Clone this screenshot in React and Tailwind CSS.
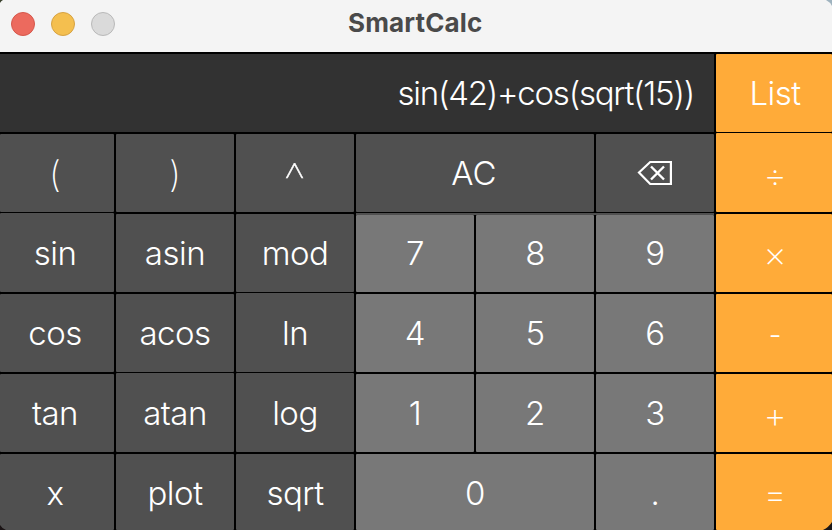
const tones = {
  dark: 'bg-[#505050]',
  light: 'bg-[#787878]',
  orange: 'bg-[#ffab39]',
}

function Key({ tone = 'dark', pad = 'pt-[19px]', className = '', weight = 'font-light', textClass = 'tracking-[-0.5px]', children }) {
  return (
    <button
      type="button"
      className={`flex min-w-0 justify-center rounded-[1px] text-[33px] leading-[40px] text-white ${weight} ${pad} ${tones[tone]} ${className}`}
    >
      <span className={`block whitespace-nowrap ${textClass}`}>{children}</span>
    </button>
  )
}

function Backspace() {
  return (
    <svg width="38" height="28" viewBox="0 0 38 28" fill="none" stroke="white" className="mt-[6px]">
      <path d="M3 13.5 L14.2 3 H34.9 V25 H14.2 Z" strokeWidth="2.2" />
      <path d="M15 7.5 L28 20.5 M28 7.5 L15 20.5" strokeWidth="2.4" />
    </svg>
  )
}

export default function App() {
  return (
    <div className="relative flex h-[530px] w-[832px] flex-col overflow-hidden bg-black font-['Inter','Liberation_Sans',sans-serif]">
      <header className="relative flex h-[52px] shrink-0 items-center bg-[#f4f4f4]">
        <div className="mb-1 ml-[11px] flex gap-4">
          <i className="size-6 rounded-full border border-[#d5574b] bg-[#ec6a5e]" />
          <i className="size-6 rounded-full border border-[#d6a243] bg-[#f4bf4f]" />
          <i className="size-6 rounded-full border border-[#b9b9b9] bg-[#dadada]" />
        </div>
        <h1 className="mb-[6px] ml-[233px] text-[26px] leading-8 font-bold tracking-[0.15px] whitespace-nowrap text-[#4a4a4a]">SmartCalc</h1>
      </header>
      <main className="grid grow grid-cols-[114px_118px_118px_118px_118px_118px_116px] grid-rows-[78px_78px_78px_78px_78px_76px] gap-[2px] pt-[2px]">
        <div className="col-span-6 flex justify-end bg-[#323232] pt-[19px] pr-[20px] text-[33px] leading-[40px] font-light text-white">
          <span className="tracking-[-1.23px] whitespace-nowrap">sin(42)+cos(sqrt(15))</span>
        </div>
        <Key tone="orange" className="pl-[2px]">List</Key>

        <Key className="pr-[4px]" pad="pt-[20px]" weight="font-extralight" textClass="text-[36px]">(</Key>
        <Key pad="pt-[20px]" weight="font-extralight" textClass="text-[36px]">)</Key>
        <Key pad="pt-[26px]" weight="font-thin" textClass="scale-x-115 text-[48px] [-webkit-text-stroke:0.4px_white]">^</Key>
        <Key className="col-span-2 pr-[2px]" textClass="">AC</Key>
        <Key><Backspace /></Key>
        <Key tone="orange" pad="pt-[22px]" className="-mt-px pl-[2px]" weight="font-extralight" textClass="text-[36px]">÷</Key>

        <Key pad="pt-[20px]" className="-mt-px pr-[4px]">sin</Key>
        <Key>asin</Key>
        <Key>mod</Key>
        <div className="col-span-3 -mt-px grid grid-cols-3 gap-[2px] border-t-2 border-[#505050] bg-black">
          <Key tone="light" pad="pt-[18px]">7</Key>
          <Key tone="light" pad="pt-[18px]">8</Key>
          <Key tone="light" pad="pt-[18px]">9</Key>
        </div>
        <Key tone="orange" pad="pt-[20px]" className="pl-[2px]" weight="font-extralight" textClass="text-[36px]">×</Key>

        <Key className="pr-[4px]">cos</Key>
        <Key>acos</Key>
        <Key pad="pt-[20px]" className="-mt-px">ln</Key>
        <Key tone="light">4</Key>
        <Key tone="light">5</Key>
        <Key tone="light">6</Key>
        <Key tone="orange" pad="pt-[21px]" className="pl-[2px]" textClass="text-[28px]">-</Key>

        <Key className="pr-[4px]">tan</Key>
        <Key pad="pt-[20px]" className="-mt-px">atan</Key>
        <Key pad="pt-[20px]" className="-mt-px">log</Key>
        <Key tone="light">1</Key>
        <Key tone="light">2</Key>
        <Key tone="light">3</Key>
        <Key tone="orange" pad="pt-[21px]" className="pl-[2px]" weight="font-extralight" textClass="text-[36px]">+</Key>

        <Key className="pr-[4px]">x</Key>
        <Key>plot</Key>
        <Key>sqrt</Key>
        <Key tone="light" className="col-span-2">0</Key>
        <Key tone="light">.</Key>
        <Key tone="orange" pad="pt-[20px]" className="pl-[2px]" weight="font-extralight" textClass="text-[36px]">=</Key>
      </main>
      <svg className="absolute top-0 left-0" width="3" height="3"><path d="M0 0H3Q1 1 0 3Z" fill="#39402c" /></svg>
      <svg className="absolute top-0 right-0" width="6" height="6"><path d="M0 0H6V6Q4 2 0 0Z" fill="#9fb3bf" /></svg>
      <svg className="absolute bottom-0 left-0" width="6" height="5"><path d="M0 0Q2 3.5 6 5H0Z" fill="#1b1415" /></svg>
      <svg className="absolute right-0 bottom-0" width="9" height="8"><path d="M9 0Q6 5 0 8H9Z" fill="#1b1718" /></svg>
    </div>
  )
}
